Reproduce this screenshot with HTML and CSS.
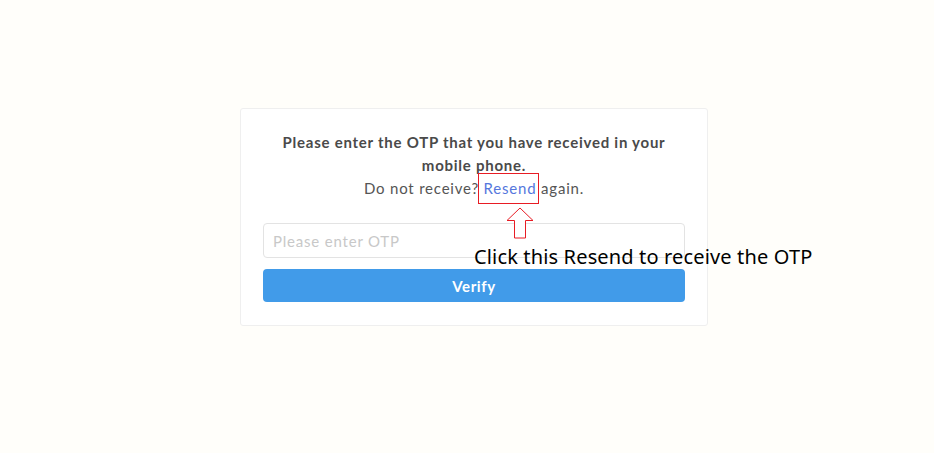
FILE: index.html
```html
<!DOCTYPE html>
<html lang="en">
<head>
  <meta charset="UTF-8" />
  <meta name="viewport" content="width=device-width, initial-scale=1" />
  <title>Verify OTP</title>
  <link rel="stylesheet" href="styles.css">
</head>
<body>
  <div class="otp-card">
    <p class="otp-msg">Please enter the OTP that you have received in your mobile phone.</p>
    <p class="otp-resend">Do not receive? <a href="#" class="resend-link">Resend</a> again.</p>
    <input type="text" class="otp-input" placeholder="Please enter OTP" />
    <button class="verify-btn">Verify</button>

    <div class="hint-box"></div>
    <svg class="hint-arrow" width="28" height="32" viewBox="0 0 28 32">
      <path d="M14 1 L27 13.5 L19.5 13.5 L19.5 31 L8.5 31 L8.5 13.5 L1 13.5 Z" fill="#fff" stroke="#e81c24" stroke-width="1"/>
    </svg>
    <div class="hint-text">Click this Resend to receive the OTP</div>
  </div>
</body>
</html>
```

FILE: styles.css
```css
* {
  box-sizing: border-box;
}
body {
  margin: 0;
  background: #fffefa;
  font-family: 'Lato', 'Noto Sans', sans-serif;
  color: #4a4a4a;
  min-height: 100vh;
}
.otp-card {
  position: relative;
  width: 468px;
  margin: 108px 0 0 240px;
  background: #fff;
  border: 1px solid #efefef;
  border-radius: 3px;
  padding: 22px 22px 23px;
  text-align: center;
}
.otp-msg {
  margin: 0 auto;
  max-width: 410px;
  font-size: 15px;
  font-weight: 700;
  line-height: 23px;
  letter-spacing: 0.75px;
  color: #4a4a4a;
}
.otp-resend {
  margin: 0 0 23px;
  font-size: 15px;
  line-height: 23px;
  letter-spacing: 0.8px;
  color: #555;
}
.resend-link {
  color: #5577dd;
  text-decoration: none;
}
.otp-input {
  display: block;
  width: 100%;
  height: 35px;
  padding: 0 9px;
  border: 1px solid #e3e3e3;
  border-radius: 4px;
  font-family: inherit;
  font-size: 15px;
  letter-spacing: 0.8px;
  color: #444;
  background: #fff;
}
.otp-input::placeholder {
  color: #c8c8c8;
}
.verify-btn {
  display: block;
  width: 100%;
  height: 33px;
  margin-top: 11px;
  border: none;
  border-radius: 4px;
  background: #419be9;
  color: #fff;
  font-family: inherit;
  font-size: 15px;
  font-weight: 700;
  letter-spacing: 0.6px;
  cursor: pointer;
}
.hint-box {
  position: absolute;
  left: 237px;
  top: 64px;
  width: 61px;
  height: 31px;
  border: 1px solid #e81c24;
}
.hint-arrow {
  position: absolute;
  left: 265px;
  top: 98px;
}
.hint-text {
  position: absolute;
  left: 233px;
  top: 135px;
  font-family: 'Noto Sans', sans-serif;
  font-size: 20px;
  letter-spacing: 0.15px;
  color: #000;
  white-space: nowrap;
  line-height: 26px;
}
```
